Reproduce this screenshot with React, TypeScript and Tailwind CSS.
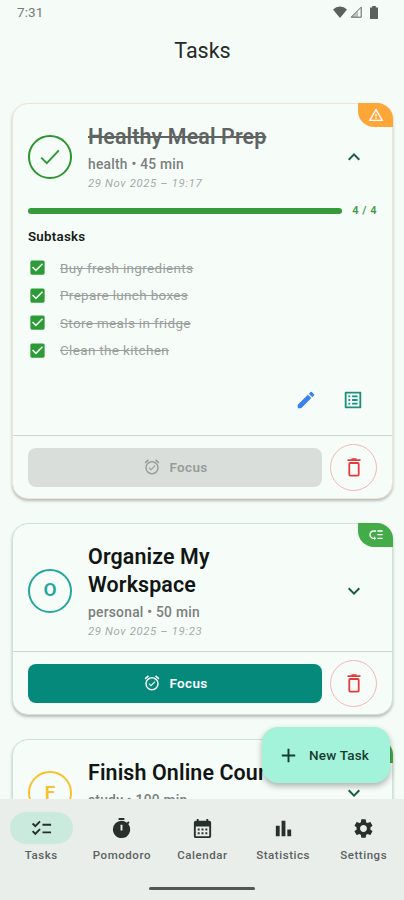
import React from "react";
import {
  MdAdd,
  MdBarChart,
  MdCalendarMonth,
  MdCheckBox,
  MdChecklist,
  MdEdit,
  MdExpandLess,
  MdExpandMore,
  MdLowPriority,
  MdOutlineAlarmOn,
  MdOutlineListAlt,
  MdSettings,
  MdTimer,
  MdWarningAmber,
} from "react-icons/md";

interface Task {
  title: string;
  meta: string;
  date: string;
  done?: boolean;
  high?: boolean;
  avatar: string;
  border: string;
  subtasks?: string[];
}

const tasks: Task[] = [
  {
    title: "Healthy Meal Prep",
    meta: "health • 45 min",
    date: "29 Nov 2025 – 19:17",
    done: true,
    high: true,
    avatar: "border-[#2b962f] text-[#2b962f]",
    border: "border-[#f3e3cf]",
    subtasks: [
      "Buy fresh ingredients",
      "Prepare lunch boxes",
      "Store meals in fridge",
      "Clean the kitchen",
    ],
  },
  {
    title: "Organize My Workspace",
    meta: "personal • 50 min",
    date: "29 Nov 2025 – 19:23",
    avatar: "border-[#26a69a] text-[#26a69a]",
    border: "border-[#cde3d5]",
  },
  {
    title: "Finish Online Course",
    meta: "study • 100 min",
    date: "29 Nov 2025 – 19:30",
    avatar: "border-[#fbc02d] text-[#fbc02d]",
    border: "border-[#cde3d5]",
  },
];

const navItems = [
  { text: "Tasks", icon: <MdChecklist />, active: true },
  { text: "Pomodoro", icon: <MdTimer /> },
  { text: "Calendar", icon: <MdCalendarMonth /> },
  { text: "Statistics", icon: <MdBarChart /> },
  { text: "Settings", icon: <MdSettings /> },
];

const StatusBar: React.FC = () => (
  <section className="h-6 flex items-center justify-between pl-[17px] pr-[26px] text-[#5c605e]">
    <span className="text-[13.5px] tracking-[0.1px] text-[#777b79]">7:31</span>
    <section className="flex items-center gap-[3px]">
      <svg width="14" height="12" viewBox="0 0 14 12">
        <path d="M7 12 0 3.4Q3 .6 7 .6T14 3.4Z" fill="currentColor" />
      </svg>
      <svg width="12" height="12" viewBox="0 0 12 12">
        <path d="M11.2 1.2v10H1.2Z" fill="none" stroke="currentColor" />
        <path d="M8 5v6H1.5Z" fill="currentColor" opacity="0.35" />
      </svg>
      <svg className="ml-[5px]" width="8" height="13" viewBox="0 0 8 13">
        <path d="M2.2 0h3.6v1.4H8V13H0V1.4h2.2Z" fill="currentColor" />
      </svg>
    </section>
  </section>
);

const Subtasks: React.FC<{ items: string[] }> = ({ items }) => (
  <section className="px-[15px]">
    <section className="flex items-center justify-between h-[14px] mt-[11px]">
      <span className="w-[314px] h-[6px] rounded-full bg-[#359b3a]" />
      <span className="text-[11px] font-semibold tracking-[0.5px] text-[#3f9c43]">4 / 4</span>
    </section>
    <h3 className="mt-[11px] h-4 leading-4 text-[13.3px] font-semibold tracking-[0.25px] text-[#151a18]">
      Subtasks
    </h3>
    <ul className="mt-[9px]">
      {items.map((item) => (
        <li key={item} className="flex items-center h-[27.6px]">
          <MdCheckBox className="size-[19px] text-[#2c9a35]" />
          <span className="ml-[13px] text-[13.5px] tracking-[0.33px] text-[#9b9f9d] line-through">
            {item}
          </span>
        </li>
      ))}
    </ul>
    <section className="flex justify-end gap-[25px] h-[71px] pt-[25px] pr-[13px]">
      <MdEdit className="size-[22px] text-[#3a80f0]" />
      <MdOutlineListAlt className="size-[22px] text-[#1b8f7e]" />
    </section>
  </section>
);

const TaskCard: React.FC<{ task: Task }> = ({ task }) => {
  const { done, high, subtasks } = task;
  return (
    <article
      className={`relative shrink-0 rounded-2xl border bg-[#f6fdf9] shadow-[0_2px_3px_rgba(0,0,0,0.25)] ${task.border}`}
    >
      <span
        className={`absolute -top-px -right-px w-[35px] h-[24px] flex items-center justify-center rounded-tr-2xl rounded-bl-2xl text-white ${
          high ? "bg-[#ffa638]" : "bg-[#43ab47]"
        }`}
      >
        {high ? (
          <MdWarningAmber className="size-4" />
        ) : (
          <MdLowPriority className="size-4 stroke-current" />
        )}
      </span>
      <section className="flex items-center pt-[18px] pl-[15px]">
        <span
          className={`size-[44px] mb-[2px] shrink-0 flex items-center justify-center rounded-full border-2 text-[19px] font-semibold ${task.avatar}`}
        >
          {done ? (
            <svg width="20" height="16" viewBox="0 0 20 16">
              <path d="m1.2 8.6 5.6 5.6L18.8 1.4" fill="none" stroke="currentColor" strokeWidth="1.8" />
            </svg>
          ) : (
            task.title[0]
          )}
        </span>
        <section className="ml-4 w-[222px]">
          <h2
            className={`pt-px text-[21.4px] leading-[27.5px] font-semibold tracking-[0.13px] ${
              done ? "text-[#5f6462] line-through" : "text-[#111614]"
            }`}
          >
            {task.title}
          </h2>
          <p className="mt-[3.5px] h-5 leading-5 text-[13.8px] font-medium tracking-[0.25px] text-[#7b7f7d]">
            {task.meta}
          </p>
          <p className="h-[19px] leading-[19px] text-[11.3px] italic tracking-[0.65px] text-[#a6aaa8]">
            {task.date}
          </p>
        </section>
        <span className="ml-[31.5px] mb-[2px] text-[#1c5b4a]">
          {done ? <MdExpandLess className="size-6" /> : <MdExpandMore className="size-6" />}
        </span>
      </section>
      {subtasks ? <Subtasks items={subtasks} /> : <section className="h-[10.5px]" />}
      <footer className="flex items-center justify-between h-[63px] px-[15px] border-t border-[#cbd5cf]">
        <button
          className={`w-[294px] h-[39px] flex items-center justify-center gap-[9px] rounded-lg text-[13.5px] font-semibold tracking-[0.3px] ${
            done ? "bg-[#d9dedb] text-[#979c99]" : "bg-[#04897a] text-white"
          }`}
        >
          <MdOutlineAlarmOn className="size-[18px]" />
          Focus
        </button>
        <button className="size-[47px] flex items-center justify-center rounded-full border border-[#f5b5b7] text-[#e53b3c]">
          <svg width="14" height="19" viewBox="0 0 14 19" fill="none" stroke="currentColor" strokeWidth="1.8">
            <path d="M.5 2.2h13M4.5 1.2h5" />
            <rect x="2.3" y="5" width="9.4" height="12.6" rx="1" />
          </svg>
        </button>
      </footer>
    </article>
  );
};

const BottomNav: React.FC = () => (
  <nav className="h-[101px] shrink-0 bg-[#e9eeeb] flex flex-col items-center">
    <section className="w-full grid grid-cols-5 pt-[13px] pl-px">
      {navItems.map((item) => (
        <section key={item.text} className="flex flex-col items-center text-[#27302c]">
          <span
            className={`w-[63px] h-8 flex items-center justify-center rounded-full text-[23px] ${
              item.active ? "bg-[#cbeade]" : ""
            }`}
          >
            {item.icon}
          </span>
          <span className="mt-[3px] h-4 leading-4 text-[11.5px] font-medium tracking-[0.55px] text-[#5a615e]">
            {item.text}
          </span>
        </section>
      ))}
    </section>
    <span className="mt-[24px] w-[106px] h-[3px] rounded-full bg-[#535856]" />
  </nav>
);

const App: React.FC = () => {
  return (
    <main className="relative w-[404px] h-[900px] flex flex-col overflow-hidden bg-[#f5fbf7] font-[Roboto,sans-serif]">
      <StatusBar />
      <h1 className="h-[54px] pl-px leading-[54px] text-center text-[21.5px] text-[#252a28]">Tasks</h1>
      <section className="flex-1 min-h-0 overflow-hidden flex flex-col gap-6 pt-[25px] pl-3 pr-[11px]">
        {tasks.map((task) => (
          <TaskCard key={task.title} task={task} />
        ))}
      </section>
      <button className="absolute left-[262px] top-[727px] w-[128px] h-[56px] flex items-center gap-[9px] pl-[15px] rounded-2xl bg-[#a3f3da] text-[#173b30] shadow-[0_3px_6px_rgba(0,0,0,0.3)]">
        <MdAdd className="size-[23px]" />
        <span className="text-[13.5px] font-medium tracking-[0.2px]">New Task</span>
      </button>
      <BottomNav />
    </main>
  );
};

export default App;
